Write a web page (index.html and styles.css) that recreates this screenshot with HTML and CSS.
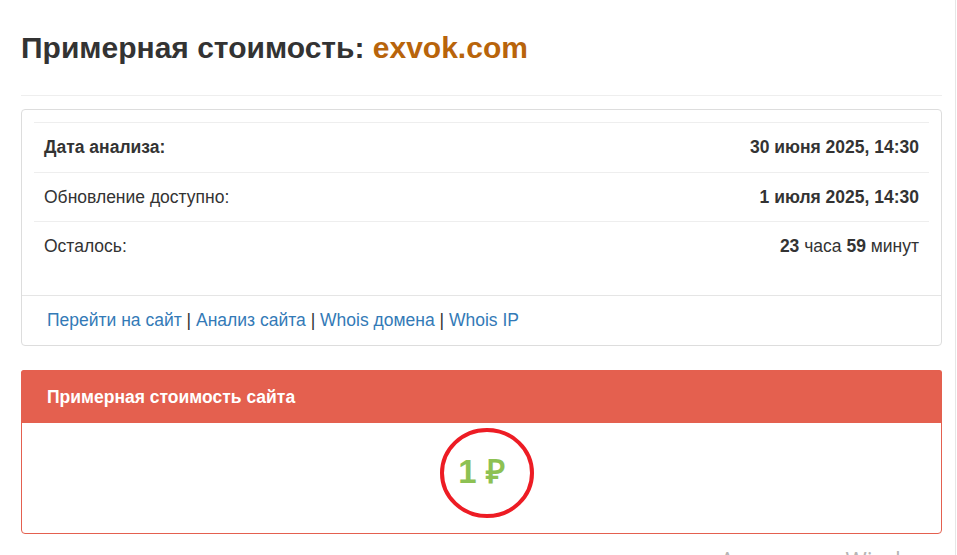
FILE: index.html
```html
<!DOCTYPE html>
<html lang="ru">
<head>
<meta charset="utf-8">
<title>Примерная стоимость: exvok.com</title>
<link rel="stylesheet" href="styles.css">
</head>
<body>
<div class="page">
  <h1 class="title">Примерная стоимость: <span class="domain">exvok.com</span></h1>
  <hr class="rule">

  <div class="panel">
    <div class="panel-body">
      <table class="info">
        <tr>
          <td class="label strong">Дата анализа:</td>
          <td class="value strong">30 июня 2025, 14:30</td>
        </tr>
        <tr>
          <td class="label">Обновление доступно:</td>
          <td class="value strong">1 июля 2025, 14:30</td>
        </tr>
        <tr>
          <td class="label">Осталось:</td>
          <td class="value"><b>23</b> часа <b>59</b> минут</td>
        </tr>
      </table>
    </div>
    <div class="panel-footer">
      <a href="#">Перейти на сайт</a> | <a href="#">Анализ сайта</a> | <a href="#">Whois домена</a> | <a href="#">Whois IP</a>
    </div>
  </div>

  <div class="panel panel-red">
    <div class="panel-heading">Примерная стоимость сайта</div>
    <div class="panel-body price-body">
      <span class="price">1 ₽
        <svg class="circle" width="98" height="94" viewBox="0 0 98 94" aria-hidden="true">
          <ellipse cx="49" cy="47" rx="45" ry="43" fill="none" stroke="#ed1c24" stroke-width="4"/>
        </svg>
      </span>
    </div>
  </div>

  <div class="watermark">Активация Windows</div>
</div>
</body>
</html>
```
FILE: styles.css
```css
html, body {
  margin: 0;
  padding: 0;
  background: #fff;
}

body {
  font-family: "Liberation Sans", Arial, Helvetica, sans-serif;
  font-size: 17.5px;
  line-height: 1.4;
  color: #333;
  overflow: hidden;
}

.page {
  position: relative;
  box-sizing: border-box;
  width: 956px;
  height: 555px;
  padding: 31px 13px 0 21px;
  border-right: 1px solid #e6e6e6;
}

.title {
  margin: 0;
  font-size: 30px;
  line-height: 1.1;
  font-weight: bold;
  color: #333;
}

.domain {
  color: #b8640b;
}

.rule {
  margin: 31px 0 13px;
  border: 0;
  border-top: 1px solid #eee;
  height: 0;
}

.panel {
  border: 1px solid #ddd;
  border-radius: 4px;
  background: #fff;
  margin-bottom: 24px;
}

.panel-body {
  padding: 12px;
}

.info {
  width: 100%;
  border-collapse: collapse;
  margin-bottom: 12px;
}

.info td {
  border-top: 1px solid #eee;
  padding: 12px 10px 12.5px;
  line-height: 24px;
}

.info .value {
  text-align: right;
}

.strong,
.info b {
  font-weight: bold;
}

.panel-footer {
  border-top: 1px solid #e5e5e5;
  padding: 12.5px 25px;
  line-height: 24px;
  color: #333;
}

.panel-footer a {
  color: #337ab7;
  text-decoration: none;
}

.panel-red {
  border-color: #e4604f;
}

.panel-red .panel-heading {
  background: #e4604f;
  color: #fff;
  font-weight: bold;
  padding: 14px 25px 14px;
  line-height: 24px;
  border-radius: 3px 3px 0 0;
  margin: -1px -1px 0;
  border: 1px solid #e4604f;
  border-bottom: 0;
}

.price-body {
  text-align: center;
  padding: 31px 0 43px;
}

.price {
  position: relative;
  display: inline-block;
  font-size: 33px;
  line-height: 36px;
  font-weight: bold;
  color: #8dc153;
}

.circle {
  position: absolute;
  left: 50%;
  top: 50%;
  margin-left: -44px;
  margin-top: -46px;
}

.watermark {
  position: absolute;
  left: 720px;
  top: 549px;
  font-family: "Open Sans", "Liberation Sans", sans-serif;
  font-size: 23px;
  line-height: 1;
  color: #b5b5b5;
  white-space: nowrap;
}
```
